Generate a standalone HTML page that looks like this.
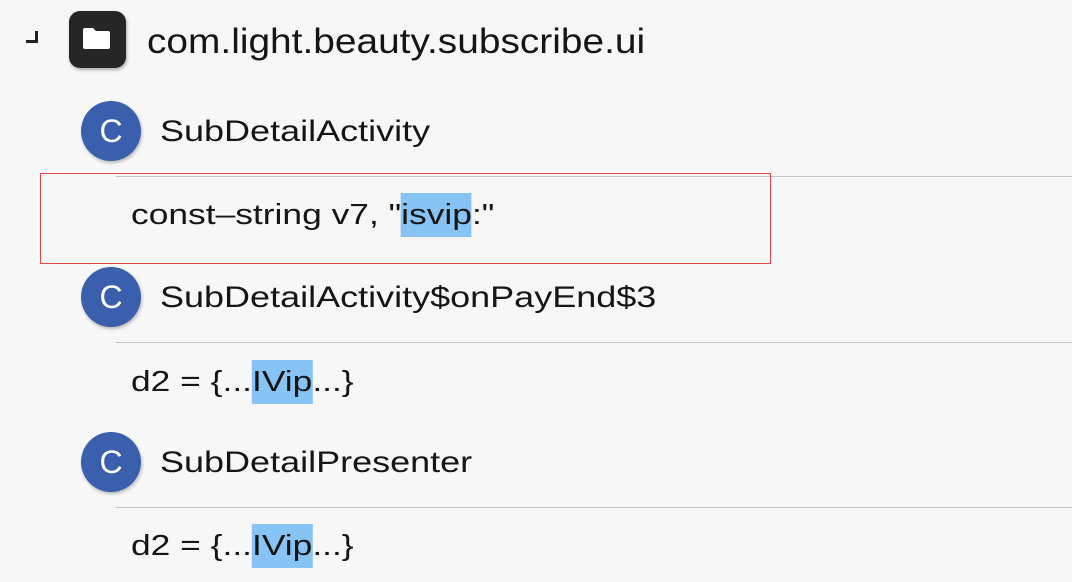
<!DOCTYPE html>
<html><head><style>
body{margin:0;width:1072px;height:582px;background:#f7f7f7;position:relative;overflow:hidden;font-family:"Liberation Sans",sans-serif;color:#151515}
.a{position:absolute}
.c{position:absolute;left:81px;width:60px;height:60px;border-radius:50%;background:#3a5fad;color:#fff;font-size:32px;line-height:60px;text-align:center;box-shadow:1px 2px 3px rgba(0,0,0,.25)}
.t{position:absolute;left:160px;font-size:30px;line-height:40px;white-space:nowrap;transform:scaleX(1.2);transform-origin:0 50%}
.s{position:absolute;left:131px;font-size:29px;line-height:40px;white-space:nowrap;transform:scaleX(1.22);transform-origin:0 50%}
.l{position:absolute;left:116px;right:0;height:1px;background:#c4c4c4}
.h{background:#88c3f5;padding:6px 0 6px}
</style></head><body>
<div class="a" style="left:26px;top:31px;width:12px;height:12px;border-right:3px solid #222;border-bottom:3px solid #222;box-sizing:border-box"></div>
<div class="a" style="left:69px;top:11px;width:57px;height:57px;border-radius:11px;background:#262626;box-shadow:1px 2px 3px rgba(0,0,0,.3)">
<svg width="57" height="57" viewBox="0 0 57 57"><path d="M14 19a2 2 0 0 1 2-2h8l3 3h12a2 2 0 0 1 2 2v14a2 2 0 0 1-2 2H16a2 2 0 0 1-2-2z" fill="#fff"/></svg></div>
<div class="a" style="left:147px;top:20px;font-size:35px;line-height:44px;white-space:nowrap;transform:scaleX(1.11);transform-origin:0 50%">com.light.beauty.subscribe.ui</div>
<div class="c" style="top:101px">C</div><div class="t" style="top:112px">SubDetailActivity</div>
<div class="l" style="top:176px"></div>
<div class="s" style="top:195px">const–string v7, "<span class="h">isvip</span>:"</div>
<div class="a" style="left:40px;top:173px;width:731px;height:91px;border:1px solid #e84545;box-sizing:border-box"></div>
<div class="c" style="top:267px">C</div><div class="t" style="top:278px">SubDetailActivity$onPayEnd$3</div>
<div class="l" style="top:342px"></div>
<div class="s" style="top:362px">d2 = {...<span class="h">IVip</span>...}</div>
<div class="c" style="top:432px">C</div><div class="t" style="top:443px">SubDetailPresenter</div>
<div class="l" style="top:507px"></div>
<div class="s" style="top:526px">d2 = {...<span class="h">IVip</span>...}</div>
</body></html>
